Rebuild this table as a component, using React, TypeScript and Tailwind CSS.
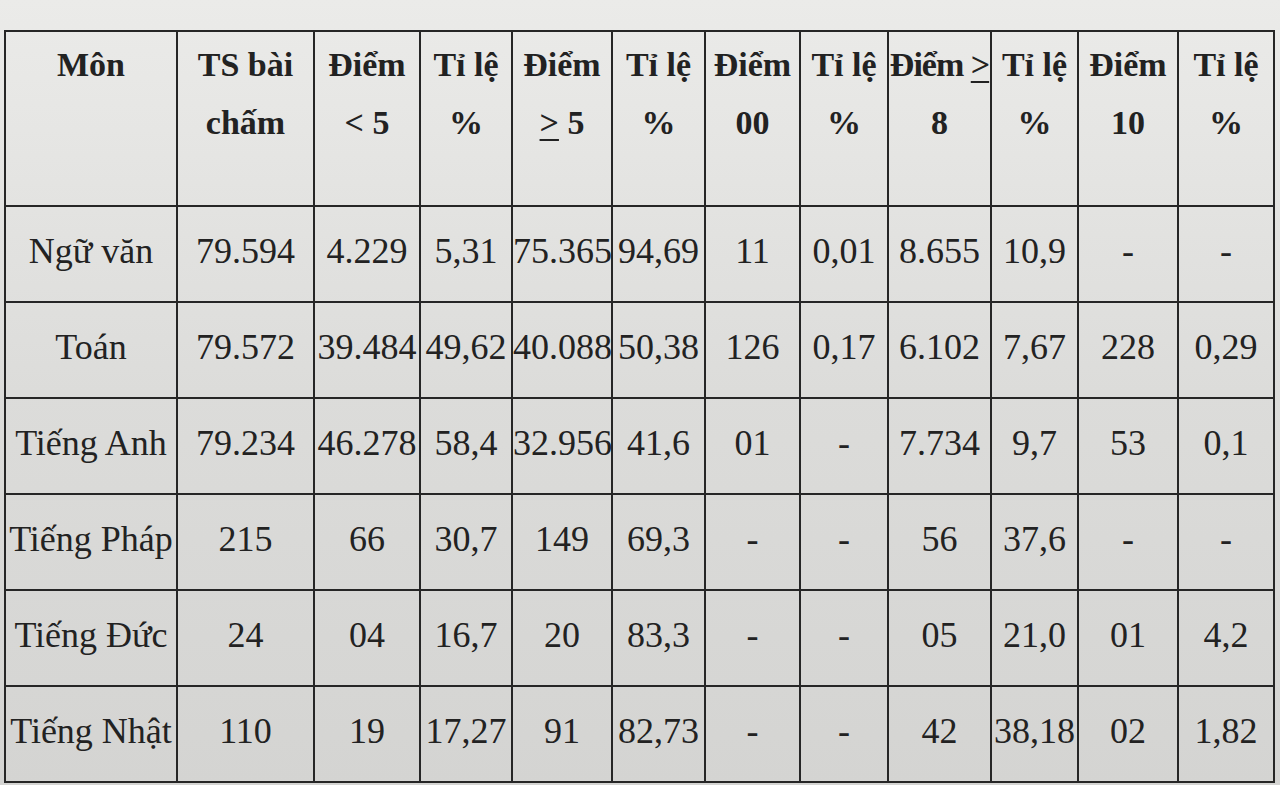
const head: [React.ReactNode, React.ReactNode][] = [
  ["Môn", ""],
  ["TS bài", "chấm"],
  ["Điểm", "< 5"],
  ["Tỉ lệ", "%"],
  ["Điểm", <><span className="underline underline-offset-[5px] decoration-2">&gt;</span> 5</>],
  ["Tỉ lệ", "%"],
  ["Điểm", "00"],
  ["Tỉ lệ", "%"],
  [<span className="tracking-[-1px]">Điểm <span className="underline underline-offset-[5px] decoration-2">&gt;</span></span>, "8"],
  ["Tỉ lệ", "%"],
  ["Điểm", "10"],
  ["Tỉ lệ", "%"],
];

const rows: string[][] = [
  ["Ngữ văn", "79.594", "4.229", "5,31", "75.365", "94,69", "11", "0,01", "8.655", "10,9", "-", "-"],
  ["Toán", "79.572", "39.484", "49,62", "40.088", "50,38", "126", "0,17", "6.102", "7,67", "228", "0,29"],
  ["Tiếng Anh", "79.234", "46.278", "58,4", "32.956", "41,6", "01", "-", "7.734", "9,7", "53", "0,1"],
  ["Tiếng Pháp", "215", "66", "30,7", "149", "69,3", "-", "-", "56", "37,6", "-", "-"],
  ["Tiếng Đức", "24", "04", "16,7", "20", "83,3", "-", "-", "05", "21,0", "01", "4,2"],
  ["Tiếng Nhật", "110", "19", "17,27", "91", "82,73", "-", "-", "42", "38,18", "02", "1,82"],
];

const widths = [
  "w-[172px]", "w-[137px]", "w-[106px]", "w-[92px]", "w-[100px]", "w-[93px]",
  "w-[95px]", "w-[88px]", "w-[103px]", "w-[87px]", "w-[100px]", "w-[96px]",
];

export default function App() {
  return (
    <div className="h-[785px] w-[1280px] overflow-hidden bg-gradient-to-b from-[#ebebe9] via-[#dcdcda] to-[#d4d4d2] pt-[30px] pl-[4px] font-['Liberation_Serif',serif] text-[#222]">
      <table className="w-[1266px] table-fixed border-collapse border-2 border-[#262626]">
        <colgroup>
          {widths.map((w, i) => (
            <col key={i} className={w} />
          ))}
        </colgroup>
        <thead>
          <tr className="h-[175px]">
            {head.map(([a, b], i) => (
              <th
                key={i}
                className="border-2 border-[#262626] px-0 pt-[4px] align-top text-center text-[34px] font-bold leading-[58px] whitespace-nowrap"
              >
                <div>{a}</div>
                {b !== "" && <div>{b}</div>}
              </th>
            ))}
          </tr>
        </thead>
        <tbody>
          {rows.map((r, ri) => (
            <tr key={ri} className="h-[96px]">
              {r.map((c, ci) => (
                <td
                  key={ci}
                  className="border-2 border-[#262626] px-0 pb-[6px] text-center align-middle text-[36px] leading-none whitespace-nowrap"
                >
                  {c}
                </td>
              ))}
            </tr>
          ))}
        </tbody>
      </table>
    </div>
  );
}
